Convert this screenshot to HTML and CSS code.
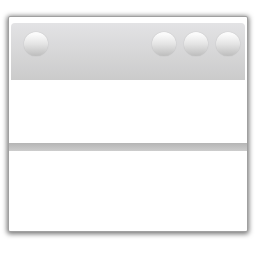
FILE: index.html
```html
<!DOCTYPE html>
<html>
<head>
<meta charset="utf-8">
<link rel="stylesheet" href="styles.css">
</head>
<body>
<div class="page">
  <div class="window">
    <div class="titlebar">
      <span class="dot"></span>
      <span class="spacer"></span>
      <span class="dot"></span>
      <span class="dot"></span>
      <span class="dot"></span>
    </div>
    <div class="pane top"></div>
    <div class="divider"></div>
    <div class="pane bottom"></div>
  </div>
</div>
</body>
</html>
```
FILE: styles.css
```css
html, body {
  margin: 0;
  padding: 0;
  background: #ffffff;
}
.page {
  width: 256px;
  height: 256px;
  padding: 16px 8px 24px 8px;
  box-sizing: border-box;
}
.window {
  width: 240px;
  height: 216px;
  box-sizing: border-box;
  background: #ffffff;
  border: 1px solid #a0a0a0;
  border-radius: 2px;
  box-shadow: 0 1px 5px 1px rgba(0, 0, 0, 0.55);
  display: flex;
  flex-direction: column;
  padding-top: 6px;
}
.titlebar {
  margin: 0 2px;
  height: 57px;
  border-radius: 4px 4px 0 0;
  background: linear-gradient(#e3e3e5, #cbcbcb);
  display: flex;
  align-items: flex-start;
  padding: 9px 5px 0 13px;
  gap: 8px;
  box-sizing: border-box;
}
.spacer {
  flex: 1;
}
.dot {
  width: 24px;
  height: 24px;
  border-radius: 50%;
  background: linear-gradient(#fbfbfb 10%, #e4e4e4 50%, #bdbdbd);
  box-shadow: 0 0 1px rgba(0, 0, 0, 0.25);
  flex: none;
}
.pane.top {
  height: 63px;
}
.divider {
  height: 8px;
  background: linear-gradient(#b5b5b5, #cdcdcd);
}
.pane.bottom {
  flex: 1;
}
```
